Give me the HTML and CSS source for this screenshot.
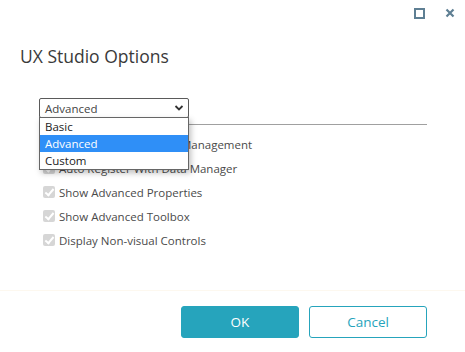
FILE: index.html
```html
<!DOCTYPE html>
<html>
	<head>
		<meta charset="UTF-8">
		<title>UX Studio Options</title>
		<link rel="stylesheet" href="styles.css">
	</head>
	<body>
		<div class="dialog">
			<div class="titlebar">
				<svg class="tb_icon" width="12" height="12" viewBox="0 0 12 12">
					<rect x="2" y="2" width="9" height="9" fill="none" stroke="#5e7f93" stroke-width="2"/>
				</svg>
				<svg class="tb_icon" width="12" height="12" viewBox="0 0 12 12">
					<path d="M2.5 2.5 L9.5 9.5 M9.5 2.5 L2.5 9.5" stroke="#5e7f93" stroke-width="2.2"/>
				</svg>
			</div>
			<h1 class="title">UX Studio Options</h1>
			<div class="body">
				<div class="combo">
					<div class="combo_box">
						<span>Advanced</span>
						<svg width="10" height="8" viewBox="0 0 10 8">
							<path d="M1.5 2 L5 5.5 L8.5 2" fill="none" stroke="#333" stroke-width="1.8"/>
						</svg>
					</div>
					<ul class="combo_list">
						<li>Basic</li>
						<li class="sel">Advanced</li>
						<li>Custom</li>
					</ul>
				</div>
				<div class="rule"></div>
				<ul class="checks">
					<li><span class="cb"></span>Enable Source Control Management</li>
					<li><span class="cb"></span>Auto Register With Data Manager</li>
					<li><span class="cb"></span>Show Advanced Properties</li>
					<li><span class="cb"></span>Show Advanced Toolbox</li>
					<li><span class="cb"></span>Display Non-visual Controls</li>
				</ul>
			</div>
			<div class="footer">
				<button class="btn btn_ok">OK</button>
				<button class="btn btn_cancel">Cancel</button>
			</div>
		</div>
	</body>
</html>
```
FILE: styles.css
```css
* {
	margin: 0;
	padding: 0;
	box-sizing: border-box;
}
ul {
	list-style: none;
}
body {
	background: #fff;
	font-family: "Open Sans", "Noto Sans", sans-serif;
	color: #333;
	width: 465px;
	height: 352px;
	overflow: hidden;
}
.dialog {
	height: 352px;
	display: flex;
	flex-direction: column;
}
.titlebar {
	height: 25px;
	display: flex;
	justify-content: flex-end;
	align-items: center;
	gap: 19px;
	padding: 0 9px 0 0;
}
.tb_icon {
	display: block;
}
.title {
	font-size: 17.5px;
	font-weight: normal;
	color: #3a3a3a;
	padding-left: 20px;
	margin-top: 19px;
	line-height: 24px;
}
.body {
	padding: 0 38px 0 39px;
	margin-top: 30px;
	flex: 1;
	position: relative;
}
.combo {
	position: relative;
	width: 150px;
	z-index: 2;
}
.combo_box {
	height: 20px;
	border: 1px solid #5a5a5a;
	border-radius: 2px;
	display: flex;
	align-items: center;
	justify-content: space-between;
	padding: 0 4px 0 5px;
	font-size: 11.5px;
	color: #444;
}
.combo_box svg {
	display: block;
}
.combo_list {
	position: absolute;
	left: 0;
	top: 19px;
	width: 150px;
	background: #fff;
	border: 1px solid #666;
	box-shadow: 2px 3px 6px rgba(0, 0, 0, 0.25);
}
.combo_list li {
	height: 17px;
	line-height: 17px;
	padding-left: 5px;
	font-size: 11.5px;
	color: #222;
}
.combo_list li.sel {
	background: #2f8ff7;
	color: #fff;
}
.rule {
	height: 1px;
	background: #a0a0a0;
	margin-top: 6px;
}
.checks {
	margin-top: 7px;
}
.checks li {
	height: 24px;
	display: flex;
	align-items: center;
	font-size: 11.5px;
	color: #4a4a4a;
	padding-left: 4px;
}
.cb {
	width: 12px;
	height: 12px;
	border-radius: 2px;
	background: #d6d6d6;
	margin-right: 4px;
	position: relative;
}
.cb:after {
	content: "";
	position: absolute;
	left: 4px;
	top: 1px;
	width: 3px;
	height: 7px;
	border: solid #fff;
	border-width: 0 2px 2px 0;
	transform: rotate(40deg);
}
.footer {
	height: 62px;
	border-top: 1px solid #fdf8ef;
	display: flex;
	justify-content: flex-end;
	gap: 10px;
	padding: 15px 38px 0 0;
}
.btn {
	width: 118px;
	height: 32px;
	border-radius: 3px;
	font-family: "Open Sans", "Noto Sans", sans-serif;
	font-size: 13.5px;
}
.btn_ok {
	background: #26a4bc;
	border: 1px solid #26a4bc;
	color: #fff;
}
.btn_cancel {
	background: #fff;
	border: 1px solid #26a4bc;
	color: #26a4bc;
}
```
